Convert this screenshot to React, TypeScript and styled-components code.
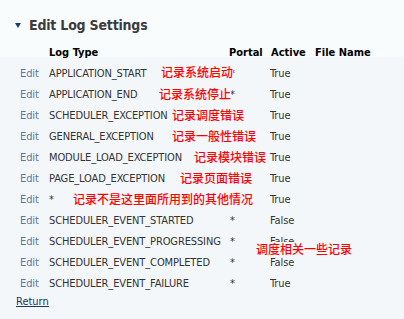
import React from "react";
import styled, { createGlobalStyle } from "styled-components";

const Global = createGlobalStyle`
  html, body { margin: 0; padding: 0; }
  body {
    background: #f4f7fa;
    font-family: "DejaVu Sans Condensed", "DejaVu Sans", sans-serif;
    font-stretch: condensed;
  }
`;

const Page = styled.div`
  position: relative;
  width: 404px;
  height: 319px;
  overflow: hidden;
  background: #f4f7fa;
`;

const TopBand = styled.div`
  background: #f8fcfd;
  height: 57px;
  box-sizing: border-box;
  padding-top: 16px;
`;

const Heading = styled.div`
  display: flex;
  align-items: center;
  gap: 8px;
  height: 18px;
  padding-left: 15px;
  font-size: 14px;
  letter-spacing: -0.2px;
  font-weight: bold;
  color: #3c3c3c;
`;

const Caret = styled.span`
  width: 0;
  height: 0;
  border-left: 3.5px solid transparent;
  border-right: 3.5px solid transparent;
  border-top: 5px solid #1d3a78;
`;

const Row = styled.div<{ $head?: boolean }>`
  display: grid;
  grid-template-columns: 29px 180px 41px 45px auto;
  padding-left: 16px;
  height: ${(p) => (p.$head ? "12px" : "21px")};
  line-height: ${(p) => (p.$head ? "12px" : "21px")};
  margin-top: ${(p) => (p.$head ? "13px" : "0")};
  font-size: 11px;
  letter-spacing: ${(p) => (p.$head ? "0" : "-0.12px")};
  font-weight: ${(p) => (p.$head ? "bold" : "normal")};
  color: ${(p) => (p.$head ? "#000" : "#333")};
  white-space: nowrap;
`;

const Cell = styled.span<{ $pad?: number }>`
  padding-left: ${(p) => p.$pad ?? 4}px;
`;

const EditLink = styled.span`
  padding-left: 4px;
  color: #5878a0;
`;

const Body = styled.div`
  padding-top: 6px;
`;

const ReturnLink = styled.a`
  display: block;
  margin-left: 16px;
  height: 15px;
  line-height: 15px;
  font-size: 11px;
  color: #1a3567;
  text-decoration: underline;
`;

const Note = styled.span<{ $x: number; $y: number }>`
  position: absolute;
  left: ${(p) => p.$x}px;
  top: ${(p) => p.$y}px;
  height: 14px;
  line-height: 14px;
  font-family: "Noto Sans CJK SC", sans-serif;
  font-weight: 500;
  font-size: 12px;
  color: #ff0000;
  background: #f4f7fa;
  white-space: nowrap;
`;

const rows: [string, string, string][] = [
  ["APPLICATION_START", "*", "True"],
  ["APPLICATION_END", "*", "True"],
  ["SCHEDULER_EXCEPTION", "*", "True"],
  ["GENERAL_EXCEPTION", "*", "True"],
  ["MODULE_LOAD_EXCEPTION", "*", "True"],
  ["PAGE_LOAD_EXCEPTION", "*", "True"],
  ["*", "*", "True"],
  ["SCHEDULER_EVENT_STARTED", "*", "False"],
  ["SCHEDULER_EVENT_PROGRESSING", "*", "False"],
  ["SCHEDULER_EVENT_COMPLETED", "*", "False"],
  ["SCHEDULER_EVENT_FAILURE", "*", "True"],
];

const notes: [string, number, number][] = [
  ["记录系统启动", 161, 65],
  ["记录系统停止", 159, 87],
  ["记录调度错误", 172, 108],
  ["记录一般性错误", 172, 129],
  ["记录模块错误", 194, 150],
  ["记录页面错误", 180, 171],
  ["记录不是这里面所用到的其他情况", 73, 192],
  ["调度相关一些记录", 256, 242],
];

export default function App() {
  return (
    <Page>
      <Global />
      <TopBand>
        <Heading>
          <Caret />
          Edit Log Settings
        </Heading>
        <Row $head>
          <Cell />
          <Cell>Log Type</Cell>
          <Cell>Portal</Cell>
          <Cell $pad={5}>Active</Cell>
          <Cell>File Name</Cell>
        </Row>
      </TopBand>
      <Body>
        {rows.map(([type, portal, active], i) => (
          <Row key={i}>
            <EditLink>Edit</EditLink>
            <Cell>{type}</Cell>
            <Cell $pad={5}>{portal}</Cell>
            <Cell>{active}</Cell>
            <Cell />
          </Row>
        ))}
        <ReturnLink href="#">Return</ReturnLink>
      </Body>
      {notes.map(([t, x, y]) => (
        <Note key={t} $x={x} $y={y}>
          {t}
        </Note>
      ))}
    </Page>
  );
}
